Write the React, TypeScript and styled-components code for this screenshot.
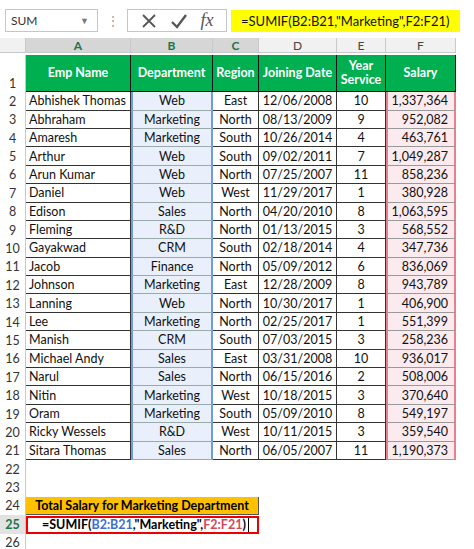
import React from "react";
import styled, { createGlobalStyle, css } from "styled-components";

const G = createGlobalStyle`
  body { margin: 0; background: #fff; font-family: Lato, "Open Sans", sans-serif; }
`;

const Page = styled.div`width: 474px; height: 549px; overflow: hidden; background: #fff;`;

const Bar = styled.div`
  display: flex; align-items: center; height: 37px; padding: 4px 6px 0 5px; box-sizing: border-box; gap: 0;
`;
const NameBox = styled.div`
  width: 93px; height: 23px; box-sizing: border-box; border: 1px solid #c6c6c6;
  display: flex; align-items: center; justify-content: space-between; padding: 0 8px 0 5px;
  font-size: 12px; color: #333;
`;
const Dots = styled.div`width: 29px; text-align: center; color: #999; font-size: 12px;`;
const Fx = styled.div`
  width: 100px; height: 23px; box-sizing: border-box; border: 1px solid #c6c6c6; margin-right: 4px;
  display: flex; align-items: center; justify-content: space-around; padding: 0 6px; color: #555;
`;
const Formula = styled.div`
  width: 229px; height: 22px; background: #ffff00; display: flex; align-items: center;
  padding-left: 10px; box-sizing: border-box; font-size: 13px; color: #111;
`;

const Sheet = styled.div`
  display: grid; margin-top: 0;
  grid-template-columns: 26px 105px 82px 46px 78px 49px 70px 18px;
  grid-auto-rows: 18.4px;
`;

type CellProps = { $kind?: string; $align?: string; $tall?: boolean };
const Cell = styled.div<CellProps>`
  font-size: 12.5px; color: #111; display: flex; align-items: center; box-sizing: border-box;
  padding: 0 3px; white-space: nowrap; overflow: hidden;
  justify-content: ${p => p.$align === "r" ? "flex-end" : p.$align === "c" ? "center" : "flex-start"};
  ${p => p.$tall && css`grid-row: span 2;`}
  ${p => p.$kind === "data" && css`border-right: 1px solid #333; border-bottom: 1px solid #333;`}
  ${p => p.$kind === "blue" && css`background: #e9effb; border-left: 2px solid #6f9be0; border-right: 2px solid #6f9be0; border-bottom: 1px solid #9aa; `}
  ${p => p.$kind === "red" && css`background: #fcebee; border-left: 2px solid #e5808f; border-right: 2px solid #e5808f; border-bottom: 1px solid #999; padding-right: 6px;`}
  ${p => p.$kind === "head" && css`background: #00b050; color: #fff; font-weight: bold; justify-content: center; text-align: center; line-height: 1.15; border-right: 1px solid #111; border-bottom: 1px solid #111; white-space: normal;`}
`;
const ColHead = styled.div<{ $sel?: boolean }>`
  height: 15px; margin-top: 1px; background: ${p => p.$sel ? "#d6d6d6" : "#f1f1f1"};
  border-right: 1px solid #c9c9c9; border-bottom: 1px solid #c9c9c9;
  color: ${p => p.$sel ? "#217346" : "#444"}; font-size: 12px; font-weight: ${p => p.$sel ? "bold" : "normal"};
  display: flex; align-items: center; justify-content: center; box-sizing: border-box;
`;
const RowNum = styled.div<{ $act?: boolean; $tall?: boolean }>`
  font-size: 12.5px; color: ${p => p.$act ? "#217346" : "#333"}; font-weight: ${p => p.$act ? "bold" : "normal"};
  display: flex; align-items: ${p => p.$tall ? "flex-end" : "center"}; justify-content: center;
  ${p => p.$tall && css`grid-row: span 2; padding-bottom: 1px;`}
  border-right: 1px solid #c9c9c9; box-sizing: border-box;
  background: ${p => p.$act ? "#e2e2e2" : "#fff"};
`;
const Total = styled.div`
  grid-column: 2 / span 3; background: #ffc000; font-weight: bold; font-size: 12.5px;
  display: flex; align-items: center; justify-content: center; border-bottom: 1px solid #555; border-right: 1px solid #555;
`;
const Edit = styled.div`
  grid-column: 2 / span 3; border: 2px solid #e00; font-weight: bold; font-size: 12.5px;
  display: flex; align-items: center; padding-left: 14px; box-sizing: border-box; margin-top: 1px;
`;
const Span = styled.span<{ $c: string }>`color: ${p => p.$c};`;
const Caret = styled.span`display: inline-block; width: 1px; height: 14px; background: #000; margin-left: 2px;`;
const Filler = styled.div``;

const rows: [string, string, string, string, string, string][] = [
  ["Abhishek Thomas","Web","East","12/06/2008","10","1,337,364"],
  ["Abhraham","Marketing","North","08/13/2009","9","952,082"],
  ["Amaresh","Marketing","South","10/26/2014","4","463,761"],
  ["Arthur","Web","South","09/02/2011","7","1,049,287"],
  ["Arun Kumar","Web","North","07/25/2007","11","858,236"],
  ["Daniel","Web","West","11/29/2017","1","380,928"],
  ["Edison","Sales","North","04/20/2010","8","1,063,595"],
  ["Fleming","R&D","North","01/13/2015","3","568,552"],
  ["Gayakwad","CRM","South","02/18/2014","4","347,736"],
  ["Jacob","Finance","North","05/09/2012","6","836,069"],
  ["Johnson","Marketing","East","12/28/2009","8","943,789"],
  ["Lanning","Web","North","10/30/2017","1","406,900"],
  ["Lee","Marketing","North","02/25/2017","1","551,399"],
  ["Manish","CRM","South","07/03/2015","3","258,236"],
  ["Michael Andy","Sales","East","03/31/2008","10","936,017"],
  ["Narul","Sales","North","06/15/2016","2","508,006"],
  ["Nitin","Marketing","West","10/18/2015","3","370,640"],
  ["Oram","Marketing","South","05/09/2010","8","549,197"],
  ["Ricky Wessels","R&D","West","10/11/2015","3","359,540"],
  ["Sitara Thomas","Sales","North","06/05/2007","11","1,190,373"],
];

export default function App() {
  return (
    <Page>
      <G />
      <Bar>
        <NameBox><span>SUM</span><span style={{ fontSize: 9, color: "#777" }}>▼</span></NameBox>
        <Dots>⋮</Dots>
        <Fx>
          <svg width="16" height="16" viewBox="0 0 16 16"><path d="M2 2L14 14M14 2L2 14" stroke="#555" strokeWidth="1.8" /></svg>
          <svg width="18" height="16" viewBox="0 0 18 16"><path d="M2 9L7 14L16 2" stroke="#555" strokeWidth="2.4" fill="none" /></svg>
          <span style={{ fontFamily: "'Liberation Serif', serif", fontStyle: "italic", fontSize: 18 }}>fx</span>
        </Fx>
        <Formula>=SUMIF(B2:B21,"Marketing",F2:F21)</Formula>
      </Bar>
      <Sheet>
        <ColHead />
        {["A","B","C","D","E","F"].map((c, i) => <ColHead key={c} $sel={i < 3}>{c}</ColHead>)}
        <Filler />
        <RowNum $tall>1</RowNum>
        {["Emp Name","Department","Region","Joining Date","Year Service","Salary"].map(h => <Cell key={h} $kind="head" $tall>{h}</Cell>)}
        <Filler style={{ gridRow: "span 2" }} />
        {rows.map((r, i) => (
          <React.Fragment key={i}>
            <RowNum>{i + 2}</RowNum>
            <Cell $kind="data">{r[0]}</Cell>
            <Cell $kind="blue" $align="c">{r[1]}</Cell>
            <Cell $kind="data" $align="c">{r[2]}</Cell>
            <Cell $kind="data" $align="c">{r[3]}</Cell>
            <Cell $kind="data" $align="c">{r[4]}</Cell>
            <Cell $kind="red" $align="r">{r[5]}</Cell>
            <Filler />
          </React.Fragment>
        ))}
        <RowNum>22</RowNum><Filler style={{ gridColumn: "span 7" }} />
        <RowNum>23</RowNum><Filler style={{ gridColumn: "span 7" }} />
        <RowNum>24</RowNum><Total>Total Salary for Marketing Department</Total><Filler style={{ gridColumn: "span 4" }} />
        <RowNum $act>25</RowNum>
        <Edit>=SUMIF(<Span $c="#3b6fd1">B2:B21</Span>,"Marketing",<Span $c="#d6455a">F2:F21</Span>)<Caret /></Edit>
        <Filler style={{ gridColumn: "span 4" }} />
        <RowNum>26</RowNum><Filler style={{ gridColumn: "span 7" }} />
      </Sheet>
    </Page>
  );
}
